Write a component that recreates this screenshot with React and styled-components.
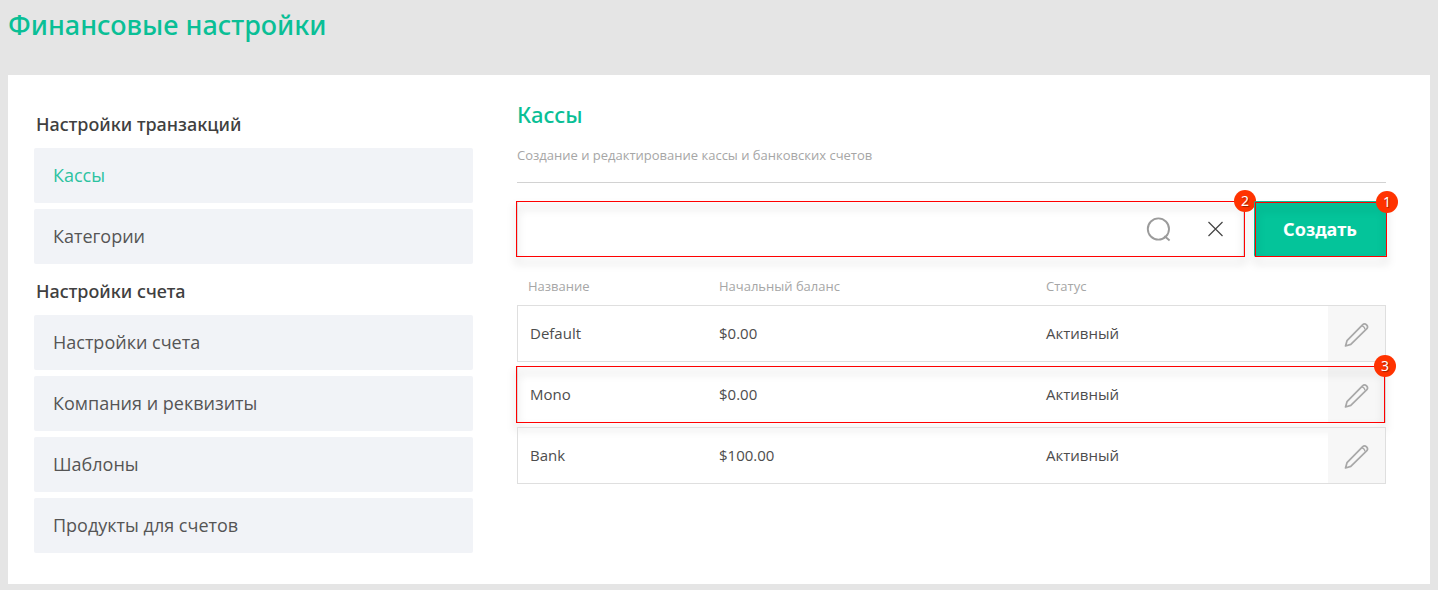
import React, { useState } from "react";
import styled, { createGlobalStyle } from "styled-components";

const GlobalStyle = createGlobalStyle`
  * {
    box-sizing: border-box;
  }

  body {
    margin: 0;
    min-height: 100vh;
    background: #e5e5e5;
    color: #4d4d4d;
    font-family: "Noto Sans", "Open Sans", sans-serif;
  }
`;

const Page = styled.div`
  padding: 8px 8px 6px;
`;

const PageTitle = styled.h1`
  margin: 0 0 33px;
  color: #0abf96;
  font-size: 27px;
  font-weight: 500;
  line-height: 34px;
`;

const Card = styled.div`
  display: grid;
  grid-template-columns: minmax(0, 439fr) minmax(0, 869fr);
  gap: 44px;
  padding: 24px 44px 31px 26px;
  background: #fff;

  @media (max-width: 800px) {
    grid-template-columns: minmax(0, 1fr);
    padding: 24px;
  }
`;

const Sidebar = styled.nav`
  padding-top: 13px;
`;

const MenuTitle = styled.h2`
  margin: 0 0 12px;
  padding-left: 2px;
  color: #404040;
  font-size: 18px;
  font-weight: 500;
  line-height: 24px;
`;

const MenuList = styled.ul`
  display: grid;
  gap: 6px;
  margin: 0 0 15px;
  padding: 0;
  list-style: none;

  &:last-child {
    margin-bottom: 0;
  }
`;

const MenuLink = styled.a`
  display: flex;
  align-items: center;
  height: 55px;
  padding: 0 19px 2px;
  border-radius: 2px;
  background: #f1f3f7;
  color: ${(props) => (props.$active ? "#2cc2a0" : "#555")};
  font-family: "Open Sans", sans-serif;
  font-size: 18px;
  line-height: 24px;
  text-decoration: none;
`;

const SectionTitle = styled.h2`
  margin: 0;
  color: #0abf96;
  font-size: 22px;
  font-weight: 500;
  line-height: 30px;
`;

const Description = styled.p`
  margin: 0;
  padding: 16px 0 17px;
  border-bottom: 1px solid #d2d2d2;
  color: #a6a6a6;
  font-family: "Open Sans", sans-serif;
  font-size: 13px;
  line-height: 20px;
`;

const Toolbar = styled.div`
  display: flex;
  gap: 10px;
  margin-top: 18px;
`;

const SearchForm = styled.form`
  position: relative;
  display: flex;
  flex: 1;
  min-width: 0;
  height: 56px;
  border: 1px solid #e0e0e0;
  border-radius: 2px;
`;

const SearchInput = styled.input`
  flex: 1;
  min-width: 0;
  padding: 0 12px;
  border: 0;
  outline: 0;
  background: transparent;
  color: #4d4d4d;
  font-family: "Open Sans", sans-serif;
  font-size: 15px;
`;

const IconBtn = styled.button`
  display: flex;
  align-items: center;
  justify-content: center;
  width: 57px;
  padding: 0;
  border: 0;
  background: transparent;
  cursor: pointer;
`;

const CreateWrap = styled.div`
  position: relative;
`;

const CreateBtn = styled.button`
  width: 132px;
  height: 56px;
  padding: 0;
  border: 0;
  border-radius: 2px;
  background: #04c49a;
  color: #fff;
  font-family: "Noto Sans", "Open Sans", sans-serif;
  font-size: 18px;
  font-weight: 700;
  cursor: pointer;
`;

const Frame = styled.div`
  position: absolute;
  inset: ${(props) => props.$inset};
  pointer-events: none;

  &::before {
    content: "";
    position: absolute;
    inset: 0;
    border: 1px solid #f00;
    filter: drop-shadow(0 6px 4px rgba(0, 0, 0, 0.35));
  }
`;

const Badge = styled.span`
  position: absolute;
  top: -11px;
  right: -11px;
  display: flex;
  align-items: center;
  justify-content: center;
  width: 22px;
  height: 22px;
  border-radius: 50%;
  background: #f30;
  color: #fff;
  font-family: "Noto Sans", sans-serif;
  font-size: 14px;
  line-height: 22px;
  text-shadow: 1px 1px 1px rgba(0, 0, 0, 0.4);
`;

const Table = styled.table`
  width: 100%;
  margin-top: 12px;
  border-collapse: separate;
  border-spacing: 0 4px;
  table-layout: fixed;
  font-family: "Open Sans", sans-serif;
`;

const HeadCell = styled.th`
  width: ${(props) => props.$width};
  height: 28px;
  padding: 0 0 2px;
  color: #a6a6a6;
  font-size: 13px;
  font-weight: 400;
  text-align: left;

  &:first-child {
    padding-left: 11px;
  }
`;

const Row = styled.tr`
  position: relative;
`;

const Cell = styled.td`
  height: 57px;
  padding: 0 0 2px;
  border: solid #dfdfdf;
  border-width: 1px 0;
  font-size: 15px;

  &:first-child {
    padding-left: 12px;
    border-left-width: 1px;
  }
`;

const EditCell = styled(Cell)`
  padding: 0;
  border-right-width: 1px;
  background: #f7f7f7;
`;

const EditBtn = styled(IconBtn)`
  height: 55px;
`;

const SearchIcon = () => (
  <svg
    width="26"
    height="26"
    viewBox="0 0 26 26"
    fill="none"
    stroke="#9b9b9b"
    strokeWidth="1.9"
  >
    <circle cx="13.4" cy="13" r="10.6" />
    <path d="M19.4 20l5.2 4.4" />
  </svg>
);

const ClearIcon = () => (
  <svg
    width="16"
    height="16"
    viewBox="0 0 16 16"
    fill="none"
    stroke="#444"
    strokeWidth="1.2"
  >
    <path d="M1.500 1l14 14M15.500 1l-14 14" />
  </svg>
);

const PencilIcon = () => (
  <svg
    width="26"
    height="26"
    viewBox="0 0 26 26"
    fill="none"
    stroke="#a8a8a8"
    strokeWidth="1.7"
    strokeLinejoin="round"
  >
    <path d="M1.500 25l1.500-5.300L18.500 3.800a2.900 2.900 0 0 1 4.100 4.100L6.800 23.400z" />
    <path d="M17.700 5.200c1.500-.4 3.400 1.500 3 3.200" strokeWidth="1.400" />
  </svg>
);

const menu = [
  { title: "Настройки транзакций", items: ["Кассы", "Категории"] },
  {
    title: "Настройки счета",
    items: [
      "Настройки счета",
      "Компания и реквизиты",
      "Шаблоны",
      "Продукты для счетов",
    ],
  },
];

const accounts = [
  { name: "Default", balance: "$0.00", status: "Активный" },
  { name: "Mono", balance: "$0.00", status: "Активный", mark: 3 },
  { name: "Bank", balance: "$100.00", status: "Активный" },
];

const Mark = ({ inset, num }) => (
  <Frame $inset={inset}>
    <Badge>{num}</Badge>
  </Frame>
);

const App = () => {
  const [query, setQuery] = useState("");
  const rows = accounts.filter((account) =>
    account.name.toLowerCase().includes(query.toLowerCase())
  );

  return (
    <>
      <GlobalStyle />
      <Page>
        <PageTitle>Финансовые настройки</PageTitle>
        <Card>
          <Sidebar>
            {menu.map((group) => (
              <React.Fragment key={group.title}>
                <MenuTitle>{group.title}</MenuTitle>
                <MenuList>
                  {group.items.map((item) => (
                    <li key={item}>
                      <MenuLink href="#" $active={item === "Кассы"}>
                        {item}
                      </MenuLink>
                    </li>
                  ))}
                </MenuList>
              </React.Fragment>
            ))}
          </Sidebar>
          <main>
            <SectionTitle>Кассы</SectionTitle>
            <Description>
              Создание и редактирование кассы и банковских счетов
            </Description>
            <Toolbar>
              <SearchForm onSubmit={(e) => e.preventDefault()}>
                <SearchInput
                  type="text"
                  aria-label="Поиск"
                  value={query}
                  onChange={(e) => setQuery(e.target.value)}
                />
                <IconBtn type="submit" aria-label="Найти">
                  <SearchIcon />
                </IconBtn>
                <IconBtn
                  type="button"
                  aria-label="Очистить"
                  onClick={() => setQuery("")}
                >
                  <ClearIcon />
                </IconBtn>
                <Mark inset="-1px -2px -1px -2px" num={2} />
              </SearchForm>
              <CreateWrap>
                <CreateBtn type="button">Создать</CreateBtn>
                <Mark inset="1px -1px 0 1px" num={1} />
              </CreateWrap>
            </Toolbar>
            <Table>
              <thead>
                <tr>
                  <HeadCell $width="202px">Название</HeadCell>
                  <HeadCell $width="327px">Начальный баланс</HeadCell>
                  <HeadCell>Статус</HeadCell>
                  <HeadCell $width="58px" aria-label="Действия" />
                </tr>
              </thead>
              <tbody>
                {rows.map((account) => (
                  <Row key={account.name}>
                    <Cell>{account.name}</Cell>
                    <Cell>{account.balance}</Cell>
                    <Cell>{account.status}</Cell>
                    <EditCell>
                      <EditBtn type="button" aria-label="Редактировать">
                        <PencilIcon />
                      </EditBtn>
                      {account.mark && (
                        <Mark inset="0 1px 0 -1px" num={account.mark} />
                      )}
                    </EditCell>
                  </Row>
                ))}
              </tbody>
            </Table>
          </main>
        </Card>
      </Page>
    </>
  );
};

export default App;
